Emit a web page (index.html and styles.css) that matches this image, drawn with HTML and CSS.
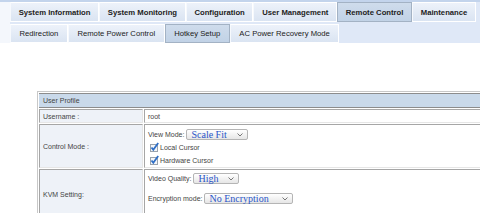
FILE: index.html
```html
<!DOCTYPE html>
<html lang="en">

<head>
  <meta charset="UTF-8" />
  <title>Hotkey Setup</title>
  <link rel="stylesheet" href="styles.css">
</head>

<body>
  <div class="menu">
    <ul class="tabs main-tabs">
      <li>System Information</li>
      <li>System Monitoring</li>
      <li>Configuration</li>
      <li>User Management</li>
      <li class="active">Remote Control</li>
      <li>Maintenance</li>
    </ul>
    <ul class="tabs sub-tabs">
      <li>Redirection</li>
      <li>Remote Power Control</li>
      <li class="active">Hotkey Setup</li>
      <li>AC Power Recovery Mode</li>
    </ul>
  </div>

  <div class="content">
    <table class="profile">
      <tr>
        <th colspan="2">User Profile</th>
      </tr>
      <tr>
        <td class="label">Username :</td>
        <td class="value">root</td>
      </tr>
      <tr>
        <td class="label">Control Mode :</td>
        <td class="value control">
          <div class="line">
            View Mode:
            <span class="select select-view">Scale Fit
              <svg class="arrow" width="6" height="4" viewBox="0 0 6 4"><path d="M0.5 0.5 L3 3 L5.5 0.5" fill="none" stroke="#777" stroke-width="1"/></svg>
            </span>
          </div>
          <div class="line check">
            <svg class="tick" width="10" height="10" viewBox="0 0 10 10">
              <rect x="1.5" y="2.5" width="7" height="7" fill="#f4f6f9" stroke="#9aa3ad"/>
              <path d="M2.5 5.5 L4.3 7.8 L9.2 1" fill="none" stroke="#2f6fc6" stroke-width="1.8"/>
            </svg>
            Local Cursor
          </div>
          <div class="line check">
            <svg class="tick" width="10" height="10" viewBox="0 0 10 10">
              <rect x="1.5" y="2.5" width="7" height="7" fill="#f4f6f9" stroke="#9aa3ad"/>
              <path d="M2.5 5.5 L4.3 7.8 L9.2 1" fill="none" stroke="#2f6fc6" stroke-width="1.8"/>
            </svg>
            Hardware Cursor
          </div>
        </td>
      </tr>
      <tr>
        <td class="label">KVM Setting:</td>
        <td class="value kvm">
          <div class="line">
            Video Quality:
            <span class="select select-quality">High
              <svg class="arrow" width="6" height="4" viewBox="0 0 6 4"><path d="M0.5 0.5 L3 3 L5.5 0.5" fill="none" stroke="#777" stroke-width="1"/></svg>
            </span>
          </div>
          <div class="line">
            Encryption mode:
            <span class="select select-enc">No Encryption
              <svg class="arrow" width="6" height="4" viewBox="0 0 6 4"><path d="M0.5 0.5 L3 3 L5.5 0.5" fill="none" stroke="#777" stroke-width="1"/></svg>
            </span>
          </div>
        </td>
      </tr>
    </table>
  </div>
</body>

</html>
```

FILE: styles.css
```css
body {
  margin: 0;
  padding: 0;
  width: 480px;
  height: 213px;
  overflow: hidden;
  background: #fff;
  font-family: "Liberation Sans", Arial, sans-serif;
  color: #333;
}

.menu {
  border-top: 2px solid #c3d4ec;
  padding-left: 10px;
  background: linear-gradient(90deg, #f4f7fc 0, #f4f7fc 10px, #dfe8f7 10px);
}

.tabs {
  list-style: none;
  margin: 0;
  padding: 0;
  display: flex;
}

.tabs li {
  display: flex;
  align-items: center;
  padding: 0 7.7px;
  border: 1px solid #fff;
  border-left-color: #f6f9fd;
  background: linear-gradient(180deg, #edf2fa, #dae4f2);
  font-size: 7.7px;
  color: #222;
  white-space: nowrap;
}

.tabs li.active {
  background: linear-gradient(180deg, #cfdcec, #c1d2e6);
  border-color: #a3b2c4;
}

.main-tabs {
  height: 20px;
  margin-bottom: 2px;
}

.main-tabs li {
  font-weight: bold;
}

.sub-tabs {
  height: 19px;
}

.sub-tabs li {
  padding: 0 8.5px;
}

.content {
  padding: 48px 0 0 37px;
}

.profile {
  width: 560px;
  border-collapse: separate;
  border-spacing: 1px;
  border: 1px solid #c8c8c8;
  font-size: 7px;
  color: #444;
}

.profile th {
  height: 13px;
  padding: 0 4px;
  text-align: left;
  font-weight: normal;
  background: #c9d9ea;
  border-top: 1px solid #8c8c8c;
  border-bottom: 1px solid #8c8c8c;
}

.profile td {
  padding: 0 3px;
  border-top: 1px solid #a6a6a6;
  border-left: 1px solid #a6a6a6;
  border-bottom: 1px solid #e6e6e6;
  border-right: 1px solid #e6e6e6;
}

.profile td.label {
  width: 96px;
  background: #eef2f8;
}

.profile td.value {
  background: #fff;
}

.profile tr:nth-child(2) td {
  height: 12px;
}

.control {
  padding-top: 4px !important;
  padding-bottom: 1px !important;
}

.kvm {
  padding-top: 3px !important;
  padding-bottom: 14px !important;
}

.line {
  display: flex;
  align-items: center;
  height: 12px;
  white-space: nowrap;
}

.control .line:first-child {
  height: 11px;
  margin-bottom: 1px;
}

.control .line:last-child {
  margin-top: 1px;
}

.kvm .line {
  height: 11px;
}

.kvm .line + .line {
  margin-top: 9px;
}

.select {
  display: inline-flex;
  align-items: center;
  justify-content: space-between;
  box-sizing: border-box;
  height: 11px;
  margin-left: 2px;
  padding: 0 4px 0 4px;
  border: 1px solid #b5b5b5;
  border-radius: 2px;
  background: linear-gradient(180deg, #ffffff, #e6e6e6);
  font-family: "Liberation Serif", "Times New Roman", serif;
  font-size: 10px;
  color: #2a55c8;
}

.select-view {
  width: 62px;
}

.select-quality {
  width: 46px;
}

.select-enc {
  width: 89px;
}

.check .tick {
  margin: 0 1px 0 1px;
}
```
